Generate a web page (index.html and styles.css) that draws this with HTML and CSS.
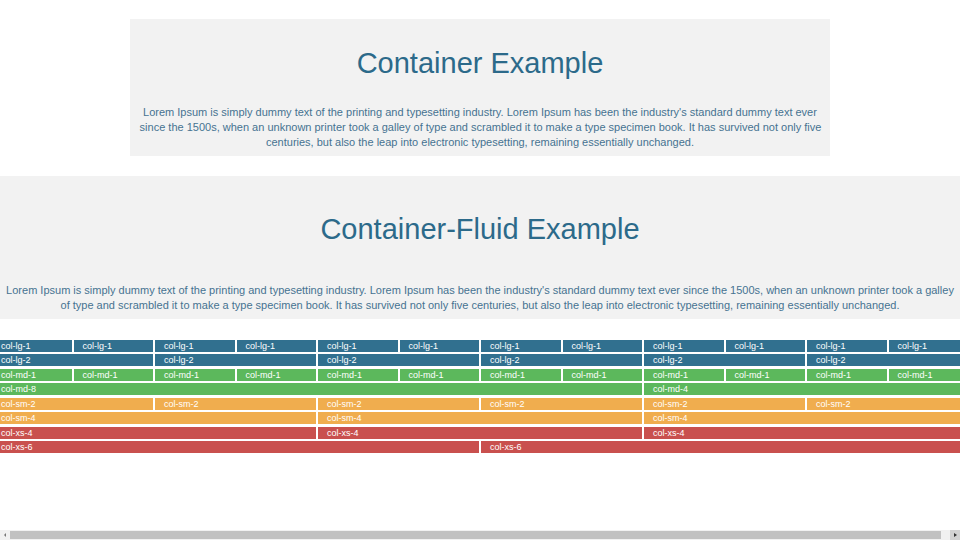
FILE: index.html
```
<!DOCTYPE html>
<html lang="en">
<head>
<meta charset="utf-8">
<title>Container Example</title>
<link rel="stylesheet" href="styles.css">
</head>
<body>
<main>
  <section class="container">
    <h1>Container Example</h1>
    <p>Lorem Ipsum is simply dummy text of the printing and typesetting industry. Lorem Ipsum has been the industry's standard dummy text ever<br>since the 1500s, when an unknown printer took a galley of type and scrambled it to make a type specimen book. It has survived not only five<br>centuries, but also the leap into electronic typesetting, remaining essentially unchanged.</p>
  </section>
  <section class="container-fluid">
    <h1>Container-Fluid Example</h1>
    <p>Lorem Ipsum is simply dummy text of the printing and typesetting industry. Lorem Ipsum has been the industry's standard dummy text ever since the 1500s, when an unknown printer took a galley<br>of type and scrambled it to make a type specimen book. It has survived not only five centuries, but also the leap into electronic typesetting, remaining essentially unchanged.</p>
  </section>
  <section class="grid">
    <div class="group lg">
      <div class="row">
        <div>col-lg-1</div><div>col-lg-1</div><div>col-lg-1</div><div>col-lg-1</div><div>col-lg-1</div><div>col-lg-1</div><div>col-lg-1</div><div>col-lg-1</div><div>col-lg-1</div><div>col-lg-1</div><div>col-lg-1</div><div>col-lg-1</div>
      </div>
      <div class="row">
        <div class="span-2">col-lg-2</div><div class="span-2">col-lg-2</div><div class="span-2">col-lg-2</div><div class="span-2">col-lg-2</div><div class="span-2">col-lg-2</div><div class="span-2">col-lg-2</div>
      </div>
    </div>
    <div class="group md">
      <div class="row">
        <div>col-md-1</div><div>col-md-1</div><div>col-md-1</div><div>col-md-1</div><div>col-md-1</div><div>col-md-1</div><div>col-md-1</div><div>col-md-1</div><div>col-md-1</div><div>col-md-1</div><div>col-md-1</div><div>col-md-1</div>
      </div>
      <div class="row">
        <div class="span-8">col-md-8</div><div class="span-4">col-md-4</div>
      </div>
    </div>
    <div class="group sm">
      <div class="row">
        <div class="span-2">col-sm-2</div><div class="span-2">col-sm-2</div><div class="span-2">col-sm-2</div><div class="span-2">col-sm-2</div><div class="span-2">col-sm-2</div><div class="span-2">col-sm-2</div>
      </div>
      <div class="row">
        <div class="span-4">col-sm-4</div><div class="span-4">col-sm-4</div><div class="span-4">col-sm-4</div>
      </div>
    </div>
    <div class="group xs">
      <div class="row">
        <div class="span-4">col-xs-4</div><div class="span-4">col-xs-4</div><div class="span-4">col-xs-4</div>
      </div>
      <div class="row">
        <div class="span-6">col-xs-6</div><div class="span-6">col-xs-6</div>
      </div>
    </div>
  </section>
</main>
<div class="scrollbar">
  <button class="arrow" type="button" aria-label="Scroll left"><svg viewBox="0 0 10 10"><path d="M6 3v4L4 5z"/></svg></button>
  <div class="track"><div class="thumb"></div></div>
  <button class="arrow active" type="button" aria-label="Scroll right"><svg viewBox="0 0 10 10"><path d="M4 3v4L7 5z"/></svg></button>
</div>
</body>
</html>
```
FILE: styles.css
```
* {
  box-sizing: border-box;
}

body {
  margin: 0;
  min-height: 100vh;
  display: flex;
  flex-direction: column;
  overflow-x: hidden;
  background: #fff;
  font-family: "Liberation Sans", Arial, sans-serif;
}

main {
  padding-top: 19px;
}

.container,
.container-fluid {
  margin-bottom: 20px;
  background: #f2f2f2;
  color: #467391;
  text-align: center;
}

.container {
  width: 73%;
  margin-inline: auto;
  padding: 27px 10px 6px;
}

.container-fluid {
  padding: 36px 0 6px;
}

h1 {
  margin: 0 0 25px;
  color: #2c6a8a;
  font-size: 29px;
  font-weight: 400;
  line-height: 34px;
}

.container-fluid h1 {
  margin-bottom: 37px;
}

p {
  margin: 0;
  font-size: 11px;
  line-height: 15px;
  white-space: nowrap;
}

.grid {
  display: grid;
  gap: 3px;
  margin: 0 -9px;
  padding-top: 1px;
  color: #fff;
  font-size: 9px;
  line-height: 12px;
}

.group {
  display: grid;
  gap: 2px;
}

.row {
  display: grid;
  grid-template-columns: repeat(12, 1fr);
}

.row > div {
  border: solid #fff;
  border-width: 0 1px;
  padding-left: 9px;
}

.row > .span-2 { grid-column: span 2; }
.row > .span-4 { grid-column: span 4; }
.row > .span-6 { grid-column: span 6; }
.row > .span-8 { grid-column: span 8; }

.lg .row > div { background: #31708f; }
.md .row > div { background: #5cb85c; }
.sm .row > div { background: #f0ad4e; }
.xs .row > div { background: #c9504e; }

.scrollbar {
  display: flex;
  margin-top: auto;
  background: #f1f1f1;
}

.arrow {
  width: 10px;
  height: 10px;
  padding: 0;
  border: 0;
  background: #f1f1f1;
  fill: #777;
}

.arrow.active {
  background: #d2d2d2;
  fill: #333;
}

.arrow svg {
  display: block;
}

.track {
  flex: 1;
  padding: 1px 0;
}

.thumb {
  width: 99%;
  height: 8px;
  background: #c1c1c1;
}
```
